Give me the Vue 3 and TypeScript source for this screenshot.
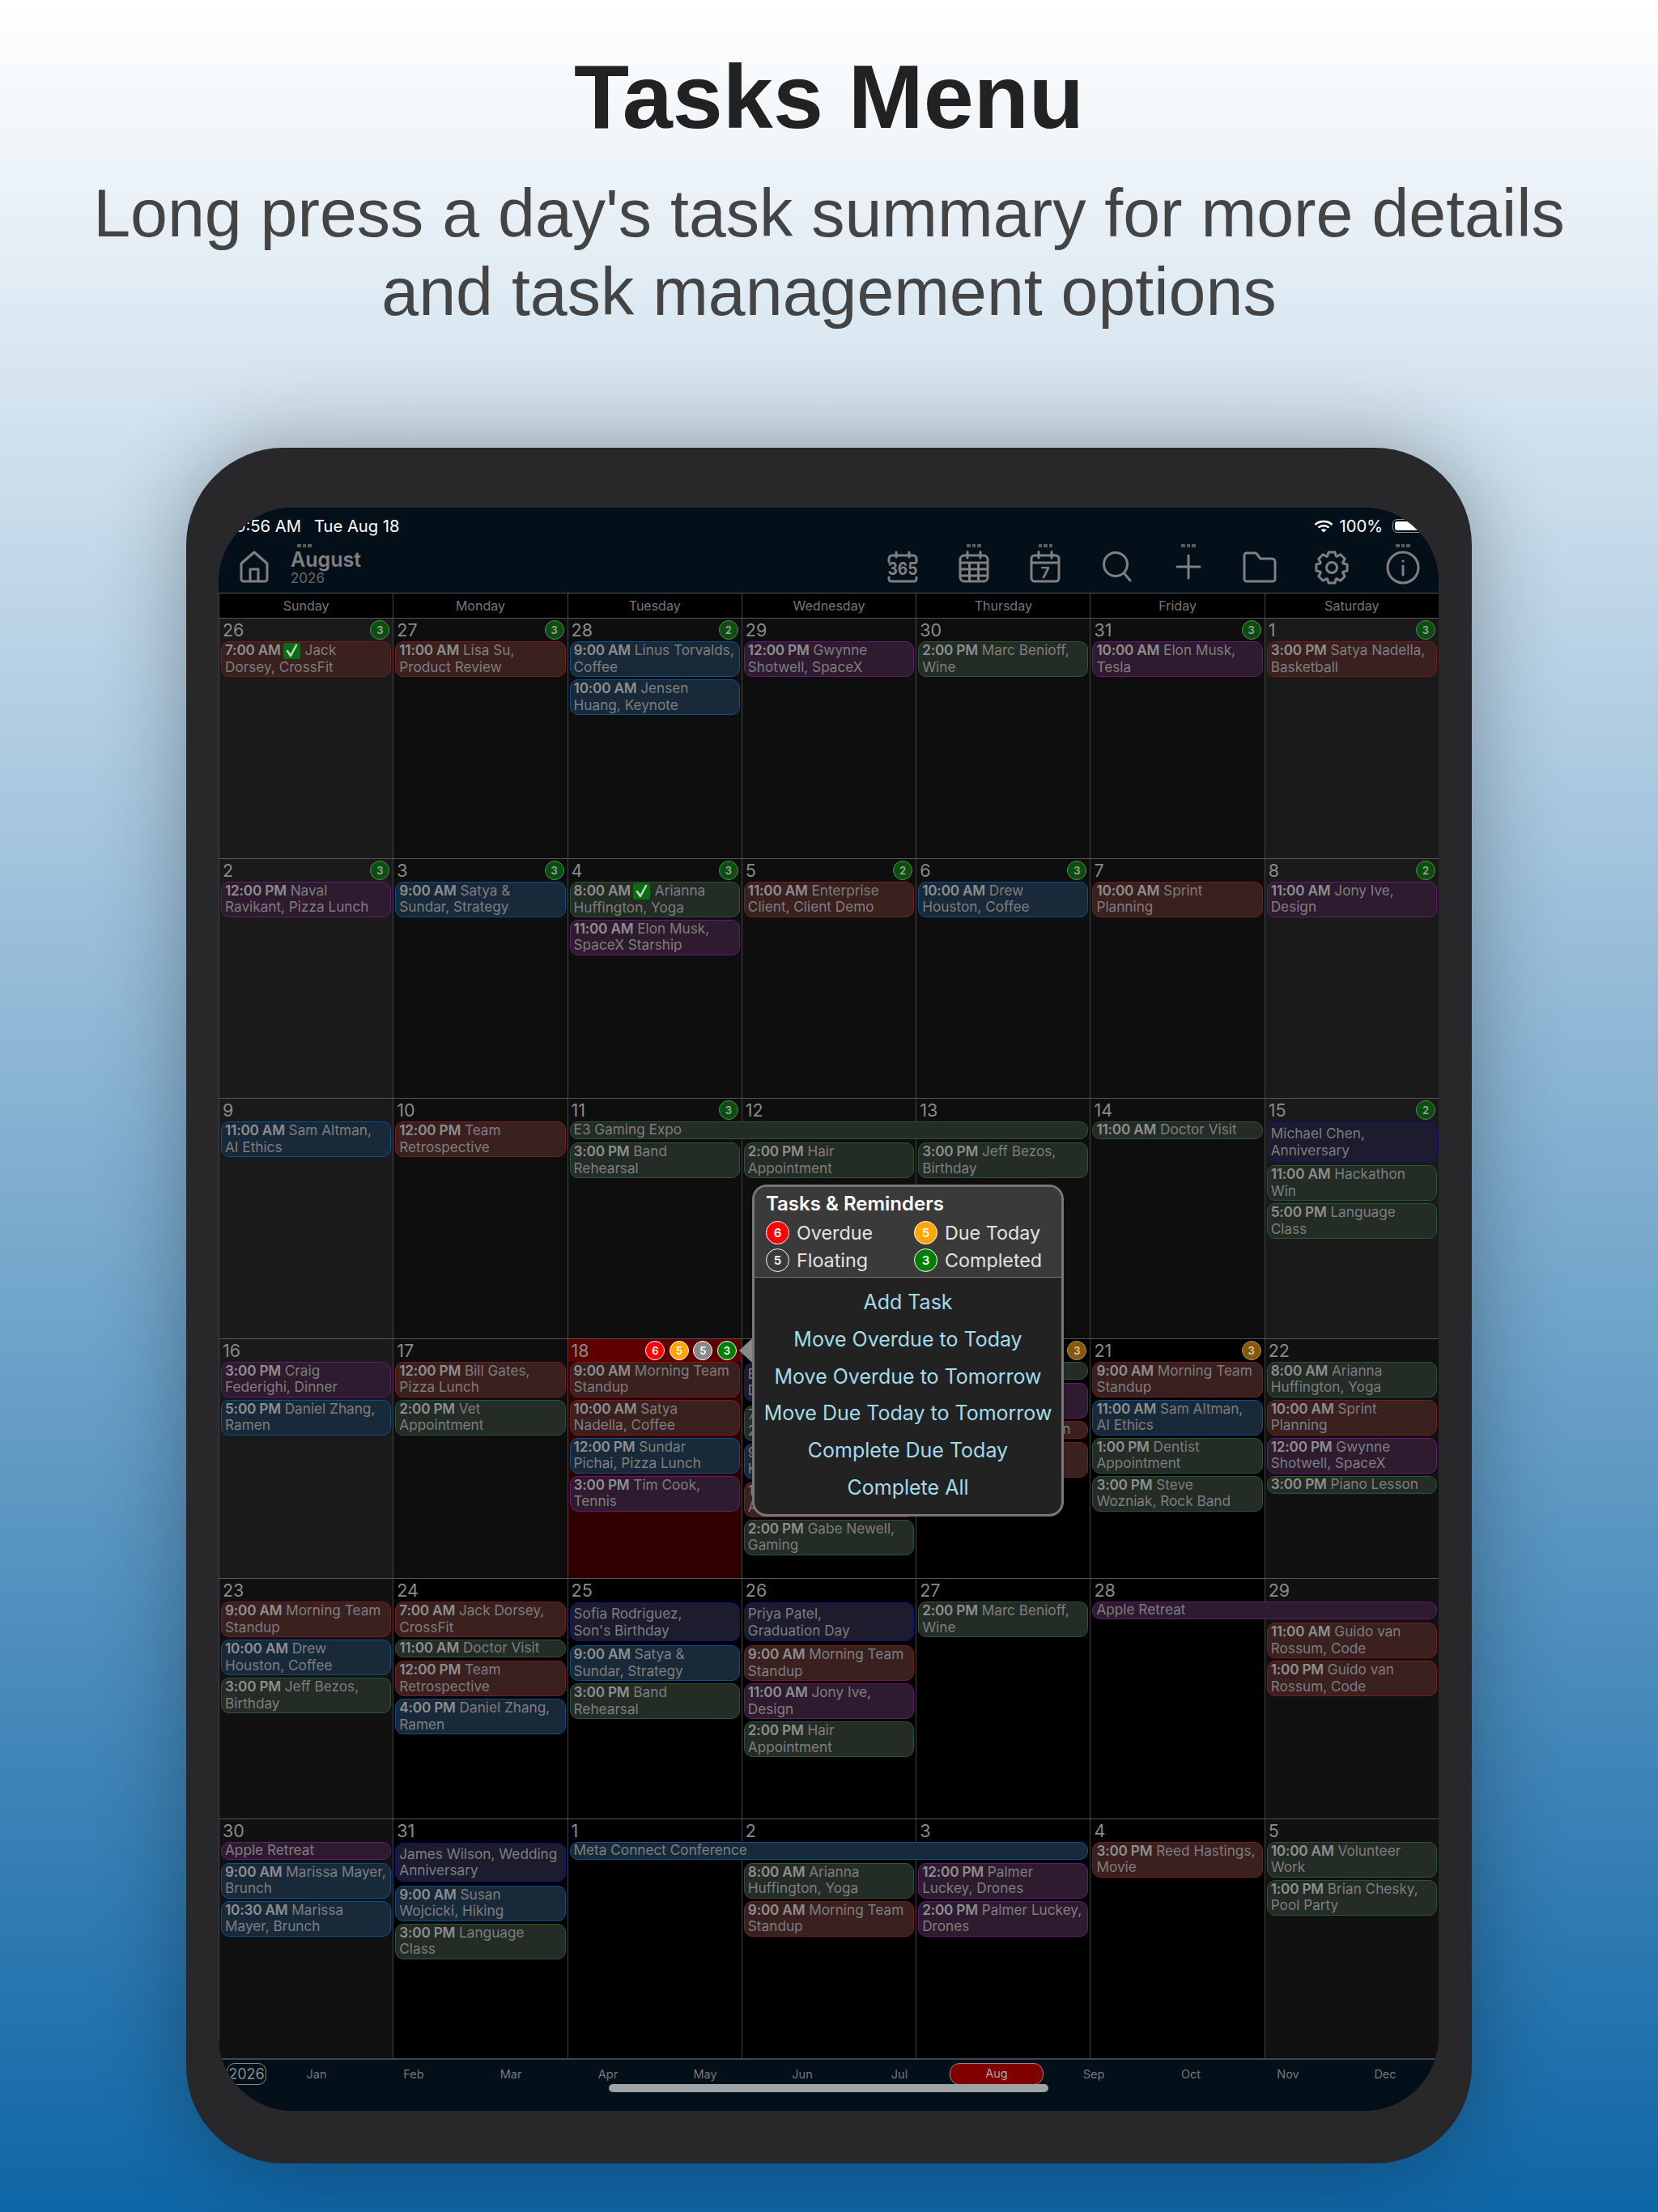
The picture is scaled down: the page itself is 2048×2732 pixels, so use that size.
<script setup lang="ts">
type Ev = { c: string; t?: string; a: string; b?: string; one?: boolean; span?: number; check?: boolean; tail?: boolean; gap?: boolean };
type Day = { n: number; k: string; badge?: number; dim?: boolean; today?: boolean; covered?: boolean; ev: Ev[] };

const ev = (c: string, t: string, a: string, b: string, check = false): Ev => ({ c, t, a, b, check });
const note = (c: string, a: string, b: string): Ev => ({ c, a, b });
const one = (c: string, t: string, a: string): Ev => ({ c, t, a, one: true });
const span = (c: string, a: string, s: number): Ev => ({ c, a, one: true, span: s });
const gap: Ev = { c: '', a: '', gap: true };

const dayNames = ['Sunday', 'Monday', 'Tuesday', 'Wednesday', 'Thursday', 'Friday', 'Saturday'];
const months = ['Jan', 'Feb', 'Mar', 'Apr', 'May', 'Jun', 'Jul', 'Aug', 'Sep', 'Oct', 'Nov', 'Dec'];
const toolDots = [false, true, true, false, true, false, false, true];

const weeks: Day[][] = [
  [
    { n: 26, k: 'pw', badge: 3, ev: [ev('r', '7:00 AM', 'Jack', 'Dorsey, CrossFit', true)] },
    { n: 27, k: 'pd', badge: 3, ev: [ev('r', '11:00 AM', 'Lisa Su,', 'Product Review')] },
    { n: 28, k: 'pd', badge: 2, ev: [ev('b', '9:00 AM', 'Linus Torvalds,', 'Coffee'), ev('b', '10:00 AM', 'Jensen', 'Huang, Keynote')] },
    { n: 29, k: 'pd', ev: [ev('p', '12:00 PM', 'Gwynne', 'Shotwell, SpaceX')] },
    { n: 30, k: 'pd', ev: [ev('g', '2:00 PM', 'Marc Benioff,', 'Wine')] },
    { n: 31, k: 'pd', badge: 3, ev: [ev('p', '10:00 AM', 'Elon Musk,', 'Tesla')] },
    { n: 1, k: 'pw', badge: 3, ev: [ev('r', '3:00 PM', 'Satya Nadella,', 'Basketball')] },
  ],
  [
    { n: 2, k: 'pw', badge: 3, ev: [ev('p', '12:00 PM', 'Naval', 'Ravikant, Pizza Lunch')] },
    { n: 3, k: 'pd', badge: 3, ev: [ev('b', '9:00 AM', 'Satya &', 'Sundar, Strategy')] },
    { n: 4, k: 'pd', badge: 3, ev: [ev('g', '8:00 AM', 'Arianna', 'Huffington, Yoga', true), ev('p', '11:00 AM', 'Elon Musk,', 'SpaceX Starship')] },
    { n: 5, k: 'pd', badge: 2, ev: [ev('r', '11:00 AM', 'Enterprise', 'Client, Client Demo')] },
    { n: 6, k: 'pd', badge: 3, ev: [ev('b', '10:00 AM', 'Drew', 'Houston, Coffee')] },
    { n: 7, k: 'pd', ev: [ev('r', '10:00 AM', 'Sprint', 'Planning')] },
    { n: 8, k: 'pw', badge: 2, ev: [ev('p', '11:00 AM', 'Jony Ive,', 'Design')] },
  ],
  [
    { n: 9, k: 'pw', ev: [ev('b', '11:00 AM', 'Sam Altman,', 'AI Ethics')] },
    { n: 10, k: 'pd', ev: [ev('r', '12:00 PM', 'Team', 'Retrospective')] },
    { n: 11, k: 'pd', badge: 3, ev: [span('g', 'E3 Gaming Expo', 3), ev('g', '3:00 PM', 'Band', 'Rehearsal')] },
    { n: 12, k: 'pd', ev: [gap, ev('g', '2:00 PM', 'Hair', 'Appointment')] },
    { n: 13, k: 'pd', ev: [gap, ev('g', '3:00 PM', 'Jeff Bezos,', 'Birthday')] },
    { n: 14, k: 'pd', ev: [one('g', '11:00 AM', 'Doctor Visit')] },
    { n: 15, k: 'pw', badge: 2, ev: [note('d', 'Michael Chen,', 'Anniversary'), ev('g', '11:00 AM', 'Hackathon', 'Win'), ev('g', '5:00 PM', 'Language', 'Class')] },
  ],
  [
    { n: 16, k: 'pw', ev: [ev('p', '3:00 PM', 'Craig', 'Federighi, Dinner'), ev('b', '5:00 PM', 'Daniel Zhang,', 'Ramen')] },
    { n: 17, k: 'pd', ev: [ev('r', '12:00 PM', 'Bill Gates,', 'Pizza Lunch'), ev('g', '2:00 PM', 'Vet', 'Appointment')] },
    { n: 18, k: 'td', today: true, ev: [ev('r', '9:00 AM', 'Morning Team', 'Standup'), ev('r', '10:00 AM', 'Satya', 'Nadella, Coffee'), ev('b', '12:00 PM', 'Sundar', 'Pichai, Pizza Lunch'), ev('p', '3:00 PM', 'Tim Cook,', 'Tennis')] },
    { n: 19, k: 'fd', covered: true, ev: [note('d', 'B', 'D'), note('g', '7', '2'), note('b', '9', 'K'), note('r', '1', 'A'), ev('g', '2:00 PM', 'Gabe Newell,', 'Gaming')] },
    { n: 20, k: 'fd', covered: true, badge: 3, dim: true, ev: [{ c: 'g', a: '', one: true }, note('p', '', ''), { c: 'r', a: 'n', one: true, tail: true }, note('r', '', '')] },
    { n: 21, k: 'fd', badge: 3, dim: true, ev: [ev('r', '9:00 AM', 'Morning Team', 'Standup'), ev('b', '11:00 AM', 'Sam Altman,', 'AI Ethics'), ev('g', '1:00 PM', 'Dentist', 'Appointment'), ev('g', '3:00 PM', 'Steve', 'Wozniak, Rock Band')] },
    { n: 22, k: 'fw', ev: [ev('g', '8:00 AM', 'Arianna', 'Huffington, Yoga'), ev('r', '10:00 AM', 'Sprint', 'Planning'), ev('p', '12:00 PM', 'Gwynne', 'Shotwell, SpaceX'), one('g', '3:00 PM', 'Piano Lesson')] },
  ],
  [
    { n: 23, k: 'fw', ev: [ev('r', '9:00 AM', 'Morning Team', 'Standup'), ev('b', '10:00 AM', 'Drew', 'Houston, Coffee'), ev('g', '3:00 PM', 'Jeff Bezos,', 'Birthday')] },
    { n: 24, k: 'fd', ev: [ev('r', '7:00 AM', 'Jack Dorsey,', 'CrossFit'), one('g', '11:00 AM', 'Doctor Visit'), ev('r', '12:00 PM', 'Team', 'Retrospective'), ev('b', '4:00 PM', 'Daniel Zhang,', 'Ramen')] },
    { n: 25, k: 'fd', ev: [note('d', 'Sofia Rodriguez,', "Son's Birthday"), ev('b', '9:00 AM', 'Satya &', 'Sundar, Strategy'), ev('g', '3:00 PM', 'Band', 'Rehearsal')] },
    { n: 26, k: 'fd', ev: [note('d', 'Priya Patel,', 'Graduation Day'), ev('r', '9:00 AM', 'Morning Team', 'Standup'), ev('p', '11:00 AM', 'Jony Ive,', 'Design'), ev('g', '2:00 PM', 'Hair', 'Appointment')] },
    { n: 27, k: 'fd', ev: [ev('g', '2:00 PM', 'Marc Benioff,', 'Wine')] },
    { n: 28, k: 'fd', ev: [span('p', 'Apple Retreat', 2)] },
    { n: 29, k: 'fw', ev: [gap, ev('r', '11:00 AM', 'Guido van', 'Rossum, Code'), ev('r', '1:00 PM', 'Guido van', 'Rossum, Code')] },
  ],
  [
    { n: 30, k: 'fw', ev: [span('p', 'Apple Retreat', 1), ev('b', '9:00 AM', 'Marissa Mayer,', 'Brunch'), ev('b', '10:30 AM', 'Marissa', 'Mayer, Brunch')] },
    { n: 31, k: 'fd', ev: [note('d', 'James Wilson, Wedding', 'Anniversary'), ev('b', '9:00 AM', 'Susan', 'Wojcicki, Hiking'), ev('g', '3:00 PM', 'Language', 'Class')] },
    { n: 1, k: 'fd', ev: [span('b', 'Meta Connect Conference', 3)] },
    { n: 2, k: 'fd', ev: [gap, ev('g', '8:00 AM', 'Arianna', 'Huffington, Yoga'), ev('r', '9:00 AM', 'Morning Team', 'Standup')] },
    { n: 3, k: 'fd', ev: [gap, ev('p', '12:00 PM', 'Palmer', 'Luckey, Drones'), ev('p', '2:00 PM', 'Palmer Luckey,', 'Drones')] },
    { n: 4, k: 'fd', ev: [ev('r', '3:00 PM', 'Reed Hastings,', 'Movie')] },
    { n: 5, k: 'fw', ev: [ev('g', '10:00 AM', 'Volunteer', 'Work'), ev('g', '1:00 PM', 'Brian Chesky,', 'Pool Party')] },
  ],
];

const todayBadges = [
  { v: 6, c: 'red' },
  { v: 5, c: 'orange' },
  { v: 5, c: 'grey' },
  { v: 3, c: 'green' },
];

const menu = ['Add Task', 'Move Overdue to Today', 'Move Overdue to Tomorrow', 'Move Due Today to Tomorrow', 'Complete Due Today', 'Complete All'];

function gearPath(): string {
  const cx = 21;
  const cy = 21;
  const pts: string[] = [];
  for (let i = 0; i < 8; i++) {
    const a = (i * Math.PI) / 4 - Math.PI / 2;
    const list: [number, number][] = [
      [15, a - 0.36],
      [19.5, a - 0.2],
      [19.5, a + 0.2],
      [15, a + 0.36],
    ];
    for (const [r, t] of list) {
      pts.push(`${(cx + r * Math.cos(t)).toFixed(2)} ${(cy + r * Math.sin(t)).toFixed(2)}`);
    }
  }
  return 'M' + pts.join(' L') + ' Z';
}
const gear = gearPath();
</script>

<template>
  <div class="page">
    <header class="hero">
      <h1 class="title">Tasks Menu</h1>
      <p class="subtitle">Long press a day's task summary for more details<br />and task management options</p>
    </header>

    <div class="frame">
      <div class="screen">
        <div class="topbar">
          <div class="status">
            <div class="status-left"><span>9:56 AM</span><span>Tue Aug 18</span></div>
            <div class="status-right">
              <svg class="wifi" width="24" height="16" viewBox="0 0 24 16" fill="none" stroke="#fff" stroke-width="2.6">
                <path d="M1.5 6 C7 0.6 17 0.6 22.5 6" />
                <path d="M5.5 9.6 C9 6.4 15 6.4 18.5 9.6" />
                <path d="M12 15.6 L8.6 12.4 C10.5 11 13.5 11 15.4 12.4 Z" fill="#fff" stroke="none" />
              </svg>
              <span>100%</span>
              <span class="battery"><span class="battery-fill"></span></span>
            </div>
          </div>
          <div class="toolrow">
            <svg class="home" width="38" height="40" viewBox="0 0 38 40" fill="none" stroke="#808080" stroke-width="3" stroke-linejoin="round">
              <path d="M3 16 L19 2 L35 16 V35 a3 3 0 0 1 -3 3 H6 a3 3 0 0 1 -3 -3 Z" />
              <path d="M14 38 V23 H24 V38" />
            </svg>
            <div class="month">
              <span class="dots"><i></i><i></i><i></i></span>
              <span class="month-name">August</span>
              <span class="month-year">2026</span>
            </div>
            <div class="tools">
              <div v-for="(d, i) in toolDots" :key="i" class="tool">
                <span class="dots" :class="{ off: !d }"><i></i><i></i><i></i></span>
                <svg v-if="i === 0" class="ico" width="40" height="40" viewBox="0 0 40 40" fill="none" stroke="#808080" stroke-width="3" stroke-linecap="round">
                  <path d="M3 14 V10 a4 4 0 0 1 4 -4 H33 a4 4 0 0 1 4 4 V14" />
                  <path d="M3 33 V35 a3 3 0 0 0 3 3 H34 a3 3 0 0 0 3 -3 V33" />
                  <path d="M12 2 V8 M28 2 V8" />
                  <text x="20" y="30" text-anchor="middle" class="ico-text big" textLength="37" lengthAdjust="spacingAndGlyphs">365</text>
                </svg>
                <svg v-else-if="i === 1" width="40" height="40" viewBox="0 0 40 40" fill="none" stroke="#808080" stroke-width="3">
                  <rect x="3" y="6" width="34" height="32" rx="5" />
                  <path d="M12 1.5 V9 M28 1.5 V9" stroke-linecap="round" />
                  <path d="M3 15 H37 M3 23 H37 M3 31 H37 M14.5 15 V38 M25.5 15 V38" />
                </svg>
                <svg v-else-if="i === 2" class="ico" width="40" height="40" viewBox="0 0 40 40" fill="none" stroke="#808080" stroke-width="3">
                  <rect x="3" y="6" width="34" height="32" rx="4" />
                  <path d="M12 1.5 V9 M28 1.5 V9" stroke-linecap="round" />
                  <path d="M3 15 H37" />
                  <text x="20" y="34" text-anchor="middle" class="ico-text seven">7</text>
                </svg>
                <svg v-else-if="i === 3" width="40" height="40" viewBox="0 0 40 40" fill="none" stroke="#808080" stroke-width="3" stroke-linecap="round">
                  <circle cx="18" cy="17" r="14.5" />
                  <path d="M29 28.5 L36 37" />
                </svg>
                <svg v-else-if="i === 4" width="40" height="40" viewBox="0 0 40 40" fill="none" stroke="#808080" stroke-width="3" stroke-linecap="round">
                  <path d="M20 6 V34 M6 20 H34" />
                </svg>
                <svg v-else-if="i === 5" width="42" height="40" viewBox="0 0 42 40" fill="none" stroke="#808080" stroke-width="3" stroke-linejoin="round">
                  <path d="M2 35 V6 a3 3 0 0 1 3 -3 H15 a3 3 0 0 1 2.4 1.2 L22 10 H36 a4 4 0 0 1 4 4 V35 a3 3 0 0 1 -3 3 H5 a3 3 0 0 1 -3 -3 Z" />
                </svg>
                <svg v-else-if="i === 6" width="42" height="42" viewBox="0 0 42 42" fill="none" stroke="#808080" stroke-width="3" stroke-linejoin="round">
                  <path :d="gear" />
                  <circle cx="21" cy="21" r="6.5" />
                </svg>
                <svg v-else width="42" height="42" viewBox="0 0 42 42" fill="none" stroke="#808080" stroke-width="3">
                  <circle cx="21" cy="21" r="19" />
                  <path d="M21 19 V30" stroke-linecap="round" />
                  <circle cx="21" cy="13" r="1.6" fill="#808080" stroke="none" />
                </svg>
              </div>
            </div>
          </div>
        </div>

        <div class="weekdays">
          <div v-for="d in dayNames" :key="d" class="weekday">{{ d }}</div>
        </div>

        <div v-for="(w, wi) in weeks" :key="wi" class="week">
          <div v-for="(d, di) in w" :key="di" class="cell" :class="d.k">
            <div class="cell-head">
              <span class="num">{{ d.covered ? '' : d.n }}</span>
              <div v-if="d.today" class="badges">
                <span v-for="(b, bi) in todayBadges" :key="bi" class="badge full" :class="b.c">{{ b.v }}</span>
              </div>
              <span v-else-if="d.badge" class="badge" :class="d.dim ? 'brown' : 'done'">{{ d.badge }}</span>
            </div>
            <template v-for="(e, ei) in d.ev" :key="ei">
              <div v-if="e.gap" class="spacer"></div>
              <div v-else class="ev" :class="[e.c, { one: e.one, tail: e.tail, s2: e.span === 2, s3: e.span === 3 }]">
                <div class="line">
                  <b v-if="e.t">{{ e.t }}</b>
                  <span v-if="e.check" class="chip">
                    <svg width="21" height="20" viewBox="0 0 21 20" fill="none" stroke="#b7d8b9" stroke-width="2.6" stroke-linecap="round" stroke-linejoin="round"><path d="M5 10 L9 16 L16 3" /></svg>
                  </span>
                  {{ e.a }}
                </div>
                <div v-if="e.b" class="line">{{ e.b }}</div>
              </div>
            </template>
          </div>
        </div>

        <div class="timeline">
          <span class="year-pill">2026</span>
          <div class="months">
            <span v-for="m in months" :key="m" class="tm" :class="{ cur: m === 'Aug' }">{{ m }}</span>
          </div>
        </div>
        <div class="indicator"></div>

        <div class="popup">
          <span class="arrow"></span>
          <div class="popup-head">
            <div class="popup-title">Tasks &amp; Reminders</div>
            <div class="legend">
              <div class="leg"><span class="lb red">6</span>Overdue</div>
              <div class="leg"><span class="lb orange">5</span>Due Today</div>
              <div class="leg"><span class="lb clear">5</span>Floating</div>
              <div class="leg"><span class="lb green">3</span>Completed</div>
            </div>
          </div>
          <div class="popup-menu">
            <div v-for="m in menu" :key="m" class="item">{{ m }}</div>
          </div>
        </div>
      </div>
    </div>
  </div>
</template>

<style scoped>
.page {
  width: 2048px;
  height: 2732px;
  overflow: hidden;
  background: linear-gradient(180deg, #ffffff 0%, #0f66a6 100%);
  font-family: Inter, "Liberation Sans", sans-serif;
}
.hero {
  padding-top: 60px;
  height: 553px;
  box-sizing: border-box;
  text-align: center;
  font-family: "Liberation Sans", sans-serif;
}
.title {
  margin: 0;
  font-size: 111.5px;
  line-height: 120px;
  font-weight: 700;
  color: #222;
}
.subtitle {
  margin: 35px 0 0;
  font-size: 82.5px;
  line-height: 97px;
  color: #444;
}
.frame {
  width: 1588px;
  height: 2119px;
  box-sizing: border-box;
  margin-left: 230px;
  padding: 74px 41px 65px 40px;
  border-radius: 120px;
  background: #28282a;
  box-shadow: 0 0 110px rgba(0, 0, 0, 0.32);
}
.screen {
  position: relative;
  width: 1507px;
  height: 1980px;
  overflow: hidden;
  border-radius: 92px;
  background: #000;
}
.topbar {
  height: 105px;
  background: #03101a;
}
.status {
  height: 45px;
  padding: 0 15px 0 21px;
  display: flex;
  align-items: center;
  justify-content: space-between;
  color: #fff;
  font-size: 20.2px;
}
.status-left {
  display: flex;
  gap: 16px;
}
.status-right {
  display: flex;
  align-items: center;
  gap: 6px;
}
.wifi {
  margin-right: 1px;
}
.battery {
  margin-left: 6px;
  width: 42px;
  height: 17px;
  box-sizing: border-box;
  padding: 2px;
  border: 1.5px solid #8a9aa5;
  border-radius: 6px;
  display: flex;
}
.battery-fill {
  flex: 1;
  background: #fff;
  border-radius: 3px;
}
.toolrow {
  display: flex;
  align-items: flex-start;
}
.home {
  margin: 8px 0 0 25px;
}
.month {
  margin-left: 26px;
  display: flex;
  flex-direction: column;
}
.month .dots {
  margin-left: 8px;
  justify-content: flex-start;
}
.month-name {
  font-size: 25px;
  line-height: 28px;
  margin-top: -3px;
  font-weight: 600;
  color: #808080;
}
.month-year {
  font-size: 17px;
  line-height: 19px;
  color: #666;
}
.tools {
  margin-left: auto;
  display: flex;
}
.tool {
  width: 88.3px;
  display: flex;
  flex-direction: column;
  align-items: center;
}
.dots {
  height: 8px;
  display: flex;
  justify-content: center;
  gap: 2px;
}
.dots i {
  width: 4.5px;
  height: 4px;
  background: #5c5c5c;
}
.dots.off i {
  background: transparent;
}
.ico {
  overflow: visible;
}
.ico-text {
  fill: #808080;
  stroke: none;
  font-family: Inter, sans-serif;
  font-weight: 700;
  font-size: 18px;
}
.ico-text.big {
  font-size: 22px;
}
.seven {
  font-size: 19px;
}
.weekdays {
  display: grid;
  grid-template-columns: repeat(7, 1fr);
  height: 31px;
  box-sizing: border-box;
  background: #000;
  border-top: 1px solid #555;
}
.weekday {
  border-left: 1px solid #444;
  text-align: center;
  font-size: 16px;
  line-height: 30px;
  color: #777;
}
.week {
  display: grid;
  grid-template-columns: repeat(7, 1fr);
  height: 296.5px;
  box-sizing: border-box;
  border-top: 1.5px solid #555;
}
.cell {
  min-width: 0;
  border-left: 1px solid #444;
}
.pd { background: #0e0e0e; }
.pw { background: #1a1a1a; }
.fd { background: #000; }
.fw { background: #111; }
.td { background: #300000; }
.cell-head {
  height: 28px;
  padding: 0 4px 0 4px;
  display: flex;
  align-items: center;
  justify-content: space-between;
}
.td .cell-head {
  background: #5e0000;
  padding-right: 6px;
}
.num {
  font-size: 21.5px;
  line-height: 28px;
  color: #8a8a8a;
}
.badges {
  display: flex;
  gap: 5.5px;
}
.badge {
  width: 24px;
  height: 24px;
  box-sizing: border-box;
  border-radius: 50%;
  border: 1.5px solid #5c855e;
  display: flex;
  align-items: center;
  justify-content: center;
  font-size: 13px;
  font-weight: 600;
  color: #a0a0a0;
}
.badge.done { background: #0a4f0e; }
.badge.brown { background: #8a5800; border-color: #8f8f8f; color: #c8c8c8; }
.badge.full { border-color: #fff; color: #fff; }
.red { background: #f00; }
.orange { background: #ffa500; }
.grey { background: #888; }
.green { background: #008000; }
.spacer {
  height: 26px;
}
.ev {
  height: 44px;
  box-sizing: border-box;
  margin: 0 2px 3px;
  padding: 0 4px;
  border: 1.5px solid;
  border-radius: 10px;
  font-size: 17.2px;
  line-height: 20.5px;
  color: #7e7e7e;
}
.ev.one {
  height: 22px;
  margin-bottom: 4px;
  line-height: 18px;
}
.ev.s2, .ev.s3 {
  position: relative;
  z-index: 1;
}
.ev.s2 { width: calc(200% - 3px); }
.ev.s3 { width: calc(300% - 2px); }
.ev.tail {
  text-align: right;
  padding-right: 21px;
}
.line {
  white-space: nowrap;
}
.line b {
  font-weight: 600;
  letter-spacing: -0.2px;
  color: #8e8e8e;
}
.chip {
  display: inline-flex;
  vertical-align: -5px;
  width: 21px;
  height: 20px;
  margin: 0 1px 0 3px;
  background: #0c6b14;
  border-radius: 3px;
}
.r { background: #3b2020; border-color: #7a1c1c; }
.b { background: #182a3a; border-color: #0c4f8c; }
.g { background: #242c26; border-color: #2c5535; }
.p { background: #2e1b30; border-color: #651a75; }
.d { background: #1c1c2e; border-color: #10108c; height: 48px; padding-top: 3px; margin-bottom: 5px; margin-top: 1px; }
.timeline {
  height: 65.5px;
  box-sizing: border-box;
  margin-top: -0.5px;
  border-top: 2.5px solid #444;
  background: #03101a;
  display: flex;
  align-items: flex-start;
  padding: 4px 0 0 10px;
}
.year-pill {
  width: 49px;
  height: 27px;
  box-sizing: border-box;
  border: 1.5px solid #8a8a8a;
  border-radius: 10px;
  display: flex;
  align-items: center;
  justify-content: center;
  font-size: 18px;
  color: #8a8a8a;
}
.months {
  margin-left: 2px;
  display: grid;
  grid-template-columns: repeat(12, 120px);
}
.tm {
  height: 27px;
  line-height: 27px;
  text-align: center;
  font-size: 14.5px;
  color: #777;
}
.tm.cur {
  justify-self: center;
  width: 116px;
  box-sizing: border-box;
  line-height: 24px;
  background: #800000;
  border: 1.5px solid #8a8a8a;
  border-radius: 12px;
  color: #a8a8a8;
}
.indicator {
  position: absolute;
  left: 482px;
  top: 1947px;
  width: 543px;
  height: 10px;
  border-radius: 5px;
  background: #9ea3a8;
}
.popup {
  position: absolute;
  left: 659px;
  top: 836px;
  width: 385px;
  height: 410px;
  box-sizing: border-box;
  border: 3px solid #777;
  border-radius: 18px;
  background: #222;
  display: flex;
  flex-direction: column;
}
.arrow {
  position: absolute;
  left: -19px;
  top: 187px;
  width: 0;
  height: 0;
  border-top: 15px solid transparent;
  border-bottom: 15px solid transparent;
  border-right: 16px solid #888;
}
.popup-head {
  height: 112px;
  box-sizing: border-box;
  padding: 5px 0 0 14px;
  background: #3a3a3a;
  border-bottom: 1.5px solid #777;
  border-radius: 15px 15px 0 0;
}
.popup-title {
  font-size: 24px;
  line-height: 32px;
  font-weight: 600;
  color: #fff;
}
.legend {
  margin-top: 2px;
  display: grid;
  grid-template-columns: 183px auto;
  grid-auto-rows: 34px;
}
.leg {
  display: flex;
  align-items: center;
  gap: 9px;
  font-size: 23.3px;
  color: #e2e2e2;
}
.lb {
  width: 29px;
  height: 29px;
  box-sizing: border-box;
  border-radius: 50%;
  border: 1.5px solid #fff;
  display: flex;
  align-items: center;
  justify-content: center;
  font-size: 15px;
  font-weight: 600;
  color: #fff;
}
.lb.clear {
  background: transparent;
}
.popup-menu {
  padding-top: 8px;
  display: flex;
  flex-direction: column;
}
.item {
  height: 45.8px;
  line-height: 45.8px;
  text-align: center;
  font-size: 25px;
  white-space: nowrap;
  color: #a4dbeb;
}
</style>

<style>
body {
  margin: 0;
}
</style>
